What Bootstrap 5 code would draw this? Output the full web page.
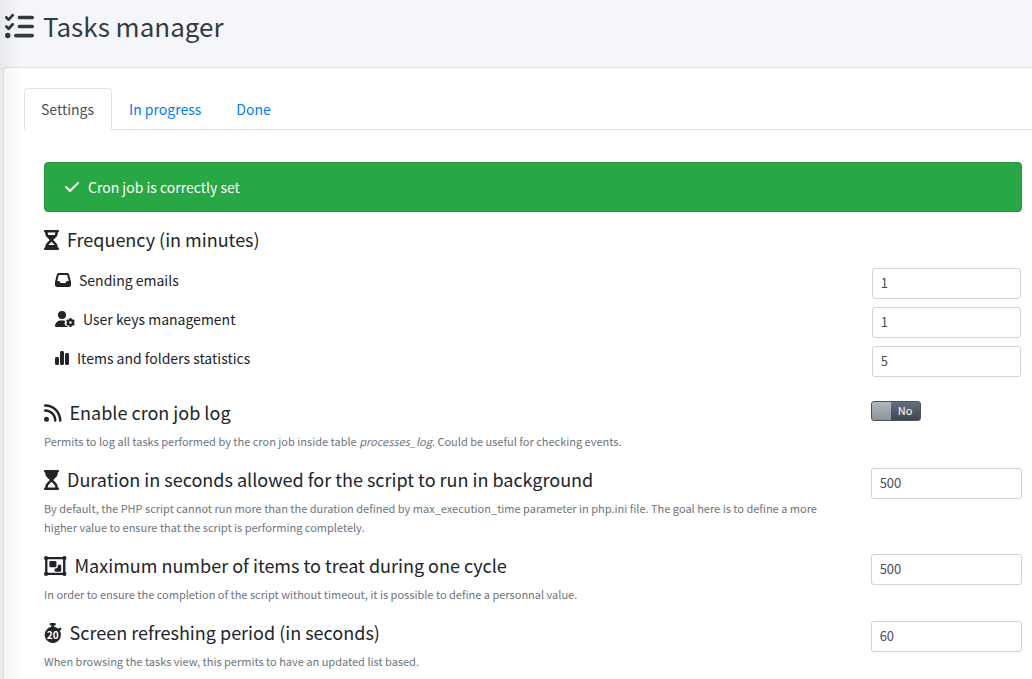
<!DOCTYPE html>
<html lang="en">
<head>
<meta charset="utf-8">
<meta name="viewport" content="width=device-width, initial-scale=1">
<title>Tasks manager</title>
<link href="https://cdn.jsdelivr.net/npm/bootstrap@5.3.0/dist/css/bootstrap.min.css" rel="stylesheet">
<style>
  body { font-family: "Noto Sans CJK SC", sans-serif; font-size: 14px; line-height: 24px; color: #212529; background: #f4f6f9; }
  body::before { content: ""; position: fixed; inset: 0 auto 0 0; width: 20px; background: linear-gradient(90deg, rgba(0,0,0,.05), rgba(0,0,0,0)); pointer-events: none; z-index: 5; }
  .fa-glyph { height: 1em; width: auto; fill: currentColor; flex: none; display: block; }
  .page-head { padding: 6px 5px 21px; gap: 9px; color: #343a40; font-size: 29px; }
  .page-head h1 { font-size: 26px; line-height: 40px; font-weight: 400; margin: 0; }
  .page-card { border: 1px solid rgba(0,0,0,.1); border-width: 1px 0 0 1px; border-radius: 4px 0 0 0; margin-left: 3px; padding: 20px 0 0 20px; box-shadow: 0 0 1px rgba(0,0,0,.12); }
  .nav-tabs { --bs-nav-link-color: #007bff; --bs-nav-link-hover-color: #0056b3; --bs-nav-tabs-link-active-color: #495057; --bs-nav-tabs-border-radius: 4px; }
  .nav-tabs .nav-link { padding: 8px 17px 8px 16px; }
  .pane { padding: 32px 10px 0 20px; }
  .alert-cron { background: #28a745; border: 1px solid #23923d; border-radius: 4px; color: #fff; padding: 12px 20px; gap: 9px; }
  .alert-cron .fa-glyph, .line-item .fa-glyph { font-size: 16px; }
  .line-head { font-size: 18px; line-height: 22px; font-weight: 400; gap: 8px; margin: 0 0 9px; }
  .line-head .fa-glyph { font-size: 20px; margin-top: 2px; }
  .line-item { gap: 8px; }
  .row { --bs-gutter-x: 14px; }
  .freq { margin: 18px 1px 24px 11px; row-gap: 8px; }
  .note { font-size: 11px; line-height: 19px; color: #6c757d; margin: 0 0 17px; padding-right: 16px; }
  .form-control { height: 31px; padding: 4px 8px 6px; font-size: 13px; line-height: 19px; color: #495057; border-color: #ced4da; border-radius: 3px; }
  .switch-no { width: 50px; height: 20px; border-radius: 3px; overflow: hidden; background: linear-gradient(#64707f, #40454f); border: 1px solid #4b535d; color: #fff; font-size: 11px; line-height: 17px; }
  .switch-no input { appearance: none; width: 19px; height: 18px; margin: 0; background: linear-gradient(#b1b7ba, #8b9498); flex: none; }
</style>
</head>
<body class="d-flex flex-column min-vh-100">
<header class="page-head d-flex align-items-center">
  <svg class="fa-glyph" viewBox="0 0 512 512" aria-hidden="true"><path d="M152.1 38.2c9.9 8.9 10.7 24 1.8 33.9l-72 80c-4.4 4.9-10.6 7.8-17.2 7.9s-12.9-2.4-17.6-7L7 113C-2.3 103.6-2.3 88.4 7 79s24.6-9.4 33.9 0l22.1 22.1 55.1-61.2c8.9-9.9 24-10.7 33.9-1.8zm0 160c9.9 8.9 10.7 24 1.8 33.9l-72 80c-4.4 4.9-10.6 7.8-17.2 7.9s-12.9-2.4-17.6-7L7 273c-9.4-9.4-9.4-24.6 0-33.9s24.6-9.4 33.9 0l22.1 22.1 55.1-61.2c8.9-9.9 24-10.7 33.9-1.8zM224 96c0-17.7 14.3-32 32-32H480c17.7 0 32 14.3 32 32s-14.3 32-32 32H256c-17.7 0-32-14.3-32-32zm0 160c0-17.7 14.3-32 32-32H480c17.7 0 32 14.3 32 32s-14.3 32-32 32H256c-17.7 0-32-14.3-32-32zM160 416c0-17.7 14.3-32 32-32H480c17.7 0 32 14.3 32 32s-14.3 32-32 32H192c-17.7 0-32-14.3-32-32zM48 368a48 48 0 1 1 0 96 48 48 0 1 1 0-96z"/></svg>
  <h1>Tasks manager</h1>
</header>
<main class="page-card bg-white flex-grow-1">
  <ul class="nav nav-tabs">
    <li class="nav-item"><a class="nav-link active" href="#settings" aria-current="page">Settings</a></li>
    <li class="nav-item"><a class="nav-link" href="#progress">In progress</a></li>
    <li class="nav-item"><a class="nav-link" href="#done">Done</a></li>
  </ul>
  <form class="pane" id="settings">
    <div class="alert-cron d-flex align-items-center mb-3" role="alert">
      <svg class="fa-glyph" viewBox="0 0 448 512" aria-hidden="true"><path d="M438.6 105.4c12.5 12.5 12.5 32.8 0 45.3l-256 256c-12.5 12.5-32.8 12.5-45.3 0l-128-128c-12.5-12.5-12.5-32.8 0-45.3s32.8-12.5 45.3 0L160 338.7 393.4 105.4c12.5-12.5 32.8-12.5 45.3 0z"/></svg>
      <span>Cron job is correctly set</span>
    </div>

    <h2 class="line-head d-flex align-items-center">
      <svg class="fa-glyph" viewBox="0 0 384 512" aria-hidden="true"><path d="M32 0C14.3 0 0 14.3 0 32S14.3 64 32 64V75c0 42.4 16.9 83.1 46.9 113.1L146.7 256 78.9 323.9C48.9 353.9 32 394.6 32 437v11c-17.7 0-32 14.3-32 32s14.3 32 32 32H352c17.7 0 32-14.3 32-32s-14.3-32-32-32V437c0-42.4-16.9-83.1-46.9-113.1L237.3 256l67.9-67.9c30-30 46.9-70.7 46.9-113.1V64c17.7 0 32-14.3 32-32s-14.3-32-32-32H32zM96 75V64H288V75c0 19-5.6 37.4-16 53H112c-10.3-15.6-16-34-16-53zm16 309c3.5-5.3 7.6-10.3 12.1-14.9L192 301.3l67.9 67.9c4.6 4.6 8.6 9.6 12.1 14.9H112z"/></svg>
      Frequency (in minutes)
    </h2>
    <div class="freq d-flex flex-column">
      <div class="row">
        <div class="col-10"><label class="line-item d-flex align-items-center" for="emails">
          <svg class="fa-glyph" viewBox="0 0 512 512" aria-hidden="true"><path d="M121 32C91.6 32 66 52 58.9 80.5L1.9 308.4C.6 313.5 0 318.7 0 323.9V416c0 35.3 28.7 64 64 64H448c35.3 0 64-28.7 64-64V323.9c0-5.2-.6-10.4-1.9-15.5l-57-227.9C446 52 420.4 32 391 32H121zm0 64H391l48 192H387.8c-12.1 0-23.2 6.8-28.6 17.7l-14.3 28.6c-5.4 10.8-16.5 17.7-28.6 17.7H195.8c-12.1 0-23.2-6.8-28.6-17.7l-14.3-28.6c-5.4-10.8-16.5-17.7-28.6-17.7H73L121 96z"/></svg>
          Sending emails</label></div>
        <div class="col-2"><input class="form-control" type="text" id="emails" value="1"></div>
      </div>
      <div class="row">
        <div class="col-10"><label class="line-item d-flex align-items-center" for="keys">
          <svg class="fa-glyph" viewBox="0 0 640 512" aria-hidden="true"><path d="M224 0a128 128 0 1 1 0 256A128 128 0 1 1 224 0zM178.3 304h91.4c11.8 0 23.4 1.2 34.5 3.3c-2.1 18.5 7.4 35.6 21.8 44.8c-16.6 10.6-26.7 31.6-20 53.3c4 12.9 9.4 25.5 16.4 37.6s15.2 23.1 24.4 33c15.7 16.9 39.6 18.4 57.2 8.7v.9c0 9.2 2.7 18.5 7.9 26.3H29.7C13.3 512 0 498.7 0 482.3C0 383.8 79.8 304 178.3 304z"/><g fill="none" stroke="currentColor"><circle cx="496" cy="368" r="78" stroke-width="74"/><path d="M496 226v44M496 466v44M373 297l38 22M581 417l38 22M373 439l38-22M581 319l38-22" stroke-width="70"/></g></svg>
          User keys management</label></div>
        <div class="col-2"><input class="form-control" type="text" id="keys" value="1"></div>
      </div>
      <div class="row">
        <div class="col-10"><label class="line-item d-flex align-items-center" for="stats">
          <svg class="fa-glyph" viewBox="0 0 448 512" aria-hidden="true"><path d="M160 80c0-26.5 21.5-48 48-48h32c26.5 0 48 21.5 48 48V432c0 26.5-21.5 48-48 48H208c-26.5 0-48-21.5-48-48V80zM0 272c0-26.5 21.5-48 48-48H80c26.5 0 48 21.5 48 48V432c0 26.5-21.5 48-48 48H48c-26.5 0-48-21.5-48-48V272zM368 96h32c26.5 0 48 21.5 48 48V432c0 26.5-21.5 48-48 48H368c-26.5 0-48-21.5-48-48V144c0-26.5 21.5-48 48-48z"/></svg>
          Items and folders statistics</label></div>
        <div class="col-2"><input class="form-control" type="text" id="stats" value="5"></div>
      </div>
    </div>

    <div class="row">
      <div class="col-10">
        <h2 class="line-head d-flex align-items-center">
          <svg class="fa-glyph" viewBox="0 0 448 512" aria-hidden="true"><path d="M0 64C0 46.3 14.3 32 32 32c229.8 0 416 186.2 416 416c0 17.7-14.3 32-32 32s-32-14.3-32-32C384 253.6 226.4 96 32 96C14.3 96 0 81.7 0 64zM0 416a64 64 0 1 1 128 0A64 64 0 1 1 0 416zM32 160c159.1 0 288 128.9 288 288c0 17.7-14.3 32-32 32s-32-14.3-32-32c0-123.7-100.3-224-224-224c-17.7 0-32-14.3-32-32s14.3-32 32-32z"/></svg>
          Enable cron job log
        </h2>
        <p class="note">Permits to log all tasks performed by the cron job inside table <i>processes_log</i>. Could be useful for checking events.</p>
      </div>
      <div class="col-2"><label class="switch-no d-flex"><input type="checkbox" role="switch" aria-label="Enable cron job log"><span class="flex-grow-1 text-center">No</span></label></div>
    </div>
    <div class="row">
      <div class="col-10">
        <label class="line-head d-flex align-items-center" for="duration">
          <svg class="fa-glyph" viewBox="0 0 384 512" aria-hidden="true"><path d="M32 0C14.3 0 0 14.3 0 32S14.3 64 32 64V75c0 42.4 16.9 83.1 46.9 113.1L146.7 256 78.9 323.9C48.9 353.9 32 394.6 32 437v11c-17.7 0-32 14.3-32 32s14.3 32 32 32H352c17.7 0 32-14.3 32-32s-14.3-32-32-32V437c0-42.4-16.9-83.1-46.9-113.1L237.3 256l67.9-67.9c30-30 46.9-70.7 46.9-113.1V64c17.7 0 32-14.3 32-32s-14.3-32-32-32H32zM288 437v11H96V437c0-25.5 10.1-49.9 28.1-67.9L192 301.3l67.9 67.9c18 18 28.1 42.4 28.1 67.9z"/></svg>
          Duration in seconds allowed for the script to run in background
        </label>
        <p class="note">By default, the PHP script cannot run more than the duration defined by max_execution_time parameter in php.ini file. The goal here is to define a more higher value to ensure that the script is performing completely.</p>
      </div>
      <div class="col-2"><input class="form-control" type="text" id="duration" value="500"></div>
    </div>
    <div class="row">
      <div class="col-10">
        <label class="line-head d-flex align-items-center" for="maxitems">
          <svg class="fa-glyph" viewBox="0 0 576 512" aria-hidden="true"><path fill-rule="evenodd" d="M28 24H548V488H28zM88 84V428H488V84z"/><circle cx="54" cy="54" r="54"/><circle cx="522" cy="54" r="54"/><circle cx="54" cy="458" r="54"/><circle cx="522" cy="458" r="54"/><path d="M166 128H290q28 0 28 28V260q0 28-28 28H166q-28 0-28-28V156q0-28 28-28zM270 328q82 0 88-76V224h54q28 0 28 28V372q0 28-28 28H298q-28 0-28-28z"/></svg>
          Maximum number of items to treat during one cycle
        </label>
        <p class="note">In order to ensure the completion of the script without timeout, it is possible to define a personnal value.</p>
      </div>
      <div class="col-2"><input class="form-control" type="text" id="maxitems" value="500"></div>
    </div>
    <div class="row">
      <div class="col-10">
        <label class="line-head d-flex align-items-center" for="refresh">
          <svg class="fa-glyph" viewBox="0 0 448 512" aria-hidden="true"><path d="M176 0h96q32 0 32 32t-32 32h-16v34c42 6 80 25 110 52l24-24q22-18 44 0t0 46l-28 28c17 30 26 64 26 96a208 208 0 1 1-240-198V64h-16q-32 0-32-32t32-32z"/><text x="224" y="398" text-anchor="middle" font-family="Noto Sans CJK SC, sans-serif" font-weight="700" font-size="260" fill="#fff">20</text></svg>
          Screen refreshing period (in seconds)
        </label>
        <p class="note mb-0">When browsing the tasks view, this permits to have an updated list based.</p>
      </div>
      <div class="col-2"><input class="form-control" type="text" id="refresh" value="60"></div>
    </div>
  </form>
</main>
<script src="https://cdn.jsdelivr.net/npm/bootstrap@5.3.0/dist/js/bootstrap.bundle.min.js"></script>
</body>
</html>
